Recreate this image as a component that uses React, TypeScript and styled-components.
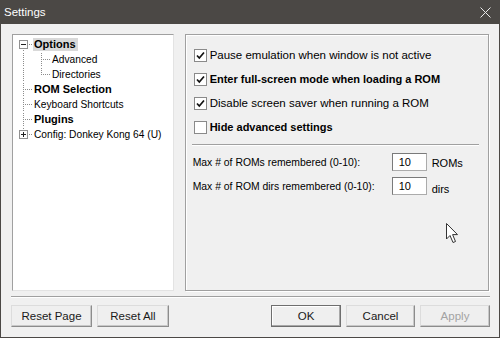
import React from 'react';
import styled, { createGlobalStyle, css } from 'styled-components';

const GlobalStyle = createGlobalStyle`
  html, body {
    margin: 0;
    padding: 0;
    background: #f0f0f0;
  }
  * {
    box-sizing: border-box;
  }
`;

const Window = styled.div`
  width: 500px;
  height: 338px;
  display: flex;
  flex-direction: column;
  background: #f0f0f0;
  border: 1px solid #4b4845;
  border-top: none;
  font-family: 'Liberation Sans', Arial, sans-serif;
  font-size: 11px;
  color: #000;
  overflow: hidden;
`;

const TitleBar = styled.div`
  height: 24px;
  flex: none;
  display: flex;
  align-items: center;
  justify-content: space-between;
  background: #4b4845;
  padding: 0 8px 0 3px;
  color: #fff;
  font-size: 11.5px;
`;

const Body = styled.div`
  flex: 1;
  display: flex;
  gap: 11px;
  padding: 10px 10px 0 11px;
  min-height: 0;
`;

const TreePanel = styled.div`
  width: 162px;
  height: 257px;
  background: #fff;
  border: 1px solid #e3e3e3;
  border-top-color: #a0a0a0;
  border-left-color: #a0a0a0;
  padding: 2px 0 0 2px;
`;

const TreeRow = styled.div`
  height: 15px;
  display: flex;
  align-items: center;
`;

const Gutter = styled.svg`
  flex: none;
  display: block;
  width: 18px;
  height: 15px;
`;

const TreeLabel = styled.span<{ $bold?: boolean; $selected?: boolean }>`
  padding: 0 1px;
  line-height: 13px;
  white-space: nowrap;
  font-weight: ${(p) => (p.$bold ? 700 : 400)};
  font-size: ${(p) => (p.$bold ? '11px' : '10.2px')};
  ${(p) =>
    p.$selected &&
    css`
      background: #d9d9d9;
      padding: 0 2px 0 1px;
    `}
`;

const OptionsPanel = styled.div`
  position: relative;
  width: 305px;
  height: 257px;
  border: 1px solid #a0a0a0;
  box-shadow: inset 1px 1px 0 #fff, 1px 1px 0 #fff;
  padding: 8px 9px 0 8px;
`;

const CheckRow = styled.label`
  height: 24px;
  display: flex;
  align-items: center;
  gap: 3px;
`;

const Box = styled.span`
  flex: none;
  width: 13px;
  height: 13px;
  border: 1px solid #8a8a8a;
  background: #fff;
  display: flex;
  align-items: center;
  justify-content: center;
`;

const CheckText = styled.span<{ $bold?: boolean }>`
  font-weight: ${(p) => (p.$bold ? 700 : 400)};
  font-size: ${(p) => (p.$bold ? '11px' : '11.5px')};
  white-space: nowrap;
`;

const Rule = styled.div<{ $inset?: number }>`
  height: 2px;
  border-top: 1px solid #a0a0a0;
  border-bottom: 1px solid #fff;
  margin: 5px ${(p) => p.$inset ?? 0}px 0 ${(p) => (p.$inset !== undefined ? -2 : 0)}px;
`;

const NumberGrid = styled.div`
  display: grid;
  grid-template-columns: 194px 35px auto;
  column-gap: 5px;
  row-gap: 6px;
  align-items: center;
  margin-top: 7px;
  margin-left: -1px;
  font-size: 10.4px;
`;

const NumberInput = styled.div`
  height: 18px;
  border: 1px solid #ababab;
  border-top-color: #7a7a7a;
  border-left-color: #7a7a7a;
  background: #fff;
  padding: 2px 0 0 6px;
  font-size: 11px;
`;

const Unit = styled.span<{ $drop?: number }>`
  padding-top: ${(p) => p.$drop ?? 0}px;
  font-size: 11px;
`;

const Pointer = styled.svg`
  position: absolute;
  left: 259px;
  top: 187px;
  width: 16px;
  height: 23px;
`;

const Footer = styled.div`
  flex: none;
  padding: 0 9px 10px 10px;
`;

const ButtonBar = styled.div`
  display: flex;
  gap: 5px;
  margin-top: 7px;
`;

const Spacer = styled.div`
  flex: 1;
`;

const Button = styled.button<{ $width: number; $default?: boolean }>`
  width: ${(p) => p.$width}px;
  height: 22px;
  background: #efefef;
  border: 1px solid #dcdcdc;
  border-right-color: #8c8c8c;
  border-bottom-color: #8c8c8c;
  box-shadow: inset -1px -1px 0 #c8c8c8;
  font-family: 'Liberation Sans', Arial, sans-serif;
  font-size: 11.5px;
  color: #1a1a1a;
  padding: 0;
  ${(p) =>
    p.$default &&
    css`
      border-color: #6e6e6e;
      box-shadow: inset -1px -1px 0 #a8a8a8, inset 1px 1px 0 #fff;
    `}
  &:disabled {
    color: #a3a3a3;
  }
`;

type GuideProps = { up?: boolean; down?: boolean; across?: boolean; box?: 'minus' | 'plus' };

const Dots = ({ x, y, len, vertical }: { x: number; y: number; len: number; vertical?: boolean }) => (
  <>
    {Array.from({ length: Math.ceil(len / 2) }, (_, i) => (
      <rect
        key={i}
        x={vertical ? x : x + i * 2}
        y={vertical ? y + i * 2 : y}
        width="1"
        height="1"
        fill="#8c8c8c"
      />
    ))}
  </>
);

const Guide = ({ up, down, across, box }: GuideProps) => (
  <Gutter viewBox="0 0 18 15">
    {up && <Dots x={8} y={box ? 1 : 1} len={box ? 2 : 7} vertical />}
    {down && <Dots x={8} y={box ? 13 : 7} len={box ? 2 : 8} vertical />}
    {across && <Dots x={box ? 14 : 10} y={7} len={box ? 3 : 7} />}
    {box && (
      <>
        <rect x="4.5" y="3.5" width="8" height="8" fill="#fff" stroke="#919191" />
        <rect x="6" y="7" width="5" height="1" fill="#222" />
        {box === 'plus' && <rect x="8" y="5" width="1" height="5" fill="#222" />}
      </>
    )}
  </Gutter>
);

const Check = ({ on }: { on: boolean }) => (
  <Box>
    {on && (
      <svg width="9" height="9" viewBox="0 0 9 9">
        <path d="M1 4.5 L3.3 7 L8 1.5" fill="none" stroke="#111" strokeWidth="1.7" />
      </svg>
    )}
  </Box>
);

const checks = [
  { text: 'Pause emulation when window is not active', on: true, bold: false },
  { text: 'Enter full-screen mode when loading a ROM', on: true, bold: true },
  { text: 'Disable screen saver when running a ROM', on: true, bold: false },
  { text: 'Hide advanced settings', on: false, bold: true },
];

const App = () => {
  return (
    <>
      <GlobalStyle />
      <Window>
        <TitleBar>
          <span>Settings</span>
          <svg width="11" height="11" viewBox="0 0 11 11">
            <path d="M0.5 0.5 L10.5 10.5 M10.5 0.5 L0.5 10.5" stroke="#e8e8e8" strokeWidth="1" />
          </svg>
        </TitleBar>
        <Body>
          <TreePanel>
            <TreeRow>
              <Guide down across box="minus" />
              <TreeLabel $bold $selected>
                Options
              </TreeLabel>
            </TreeRow>
            <TreeRow>
              <Guide up down />
              <Guide up down across />
              <TreeLabel>Advanced</TreeLabel>
            </TreeRow>
            <TreeRow>
              <Guide up down />
              <Guide up across />
              <TreeLabel>Directories</TreeLabel>
            </TreeRow>
            <TreeRow>
              <Guide up down across />
              <TreeLabel $bold>ROM Selection</TreeLabel>
            </TreeRow>
            <TreeRow>
              <Guide up down across />
              <TreeLabel>Keyboard Shortcuts</TreeLabel>
            </TreeRow>
            <TreeRow>
              <Guide up down across />
              <TreeLabel $bold>Plugins</TreeLabel>
            </TreeRow>
            <TreeRow>
              <Guide up across box="plus" />
              <TreeLabel>Config: Donkey Kong 64 (U)</TreeLabel>
            </TreeRow>
          </TreePanel>
          <OptionsPanel>
            {checks.map((c) => (
              <CheckRow key={c.text}>
                <Check on={c.on} />
                <CheckText $bold={c.bold}>{c.text}</CheckText>
              </CheckRow>
            ))}
            <Rule $inset={0} />
            <NumberGrid>
              <span>Max # of ROMs remembered (0-10):</span>
              <NumberInput>10</NumberInput>
              <Unit $drop={2}>ROMs</Unit>
              <span>Max # of ROM dirs remembered (0-10):</span>
              <NumberInput>10</NumberInput>
              <Unit $drop={6}>dirs</Unit>
            </NumberGrid>
            <Pointer viewBox="0 0 16 23">
              <path
                d="M1.5 1.5 L1.5 17 L5 13.5 L8 20.5 L10.5 19.5 L7.6 12.6 L12.5 12.6 Z"
                fill="#fff"
                stroke="#333"
                strokeWidth="1"
                strokeLinejoin="round"
              />
            </Pointer>
          </OptionsPanel>
        </Body>
        <Footer>
          <Rule />
          <ButtonBar>
            <Button $width={81}>Reset Page</Button>
            <Button $width={72}>Reset All</Button>
            <Spacer />
            <Button $width={70} $default>
              OK
            </Button>
            <Button $width={69}>Cancel</Button>
            <Button $width={70} disabled>
              Apply
            </Button>
          </ButtonBar>
        </Footer>
      </Window>
    </>
  );
};

export default App;
